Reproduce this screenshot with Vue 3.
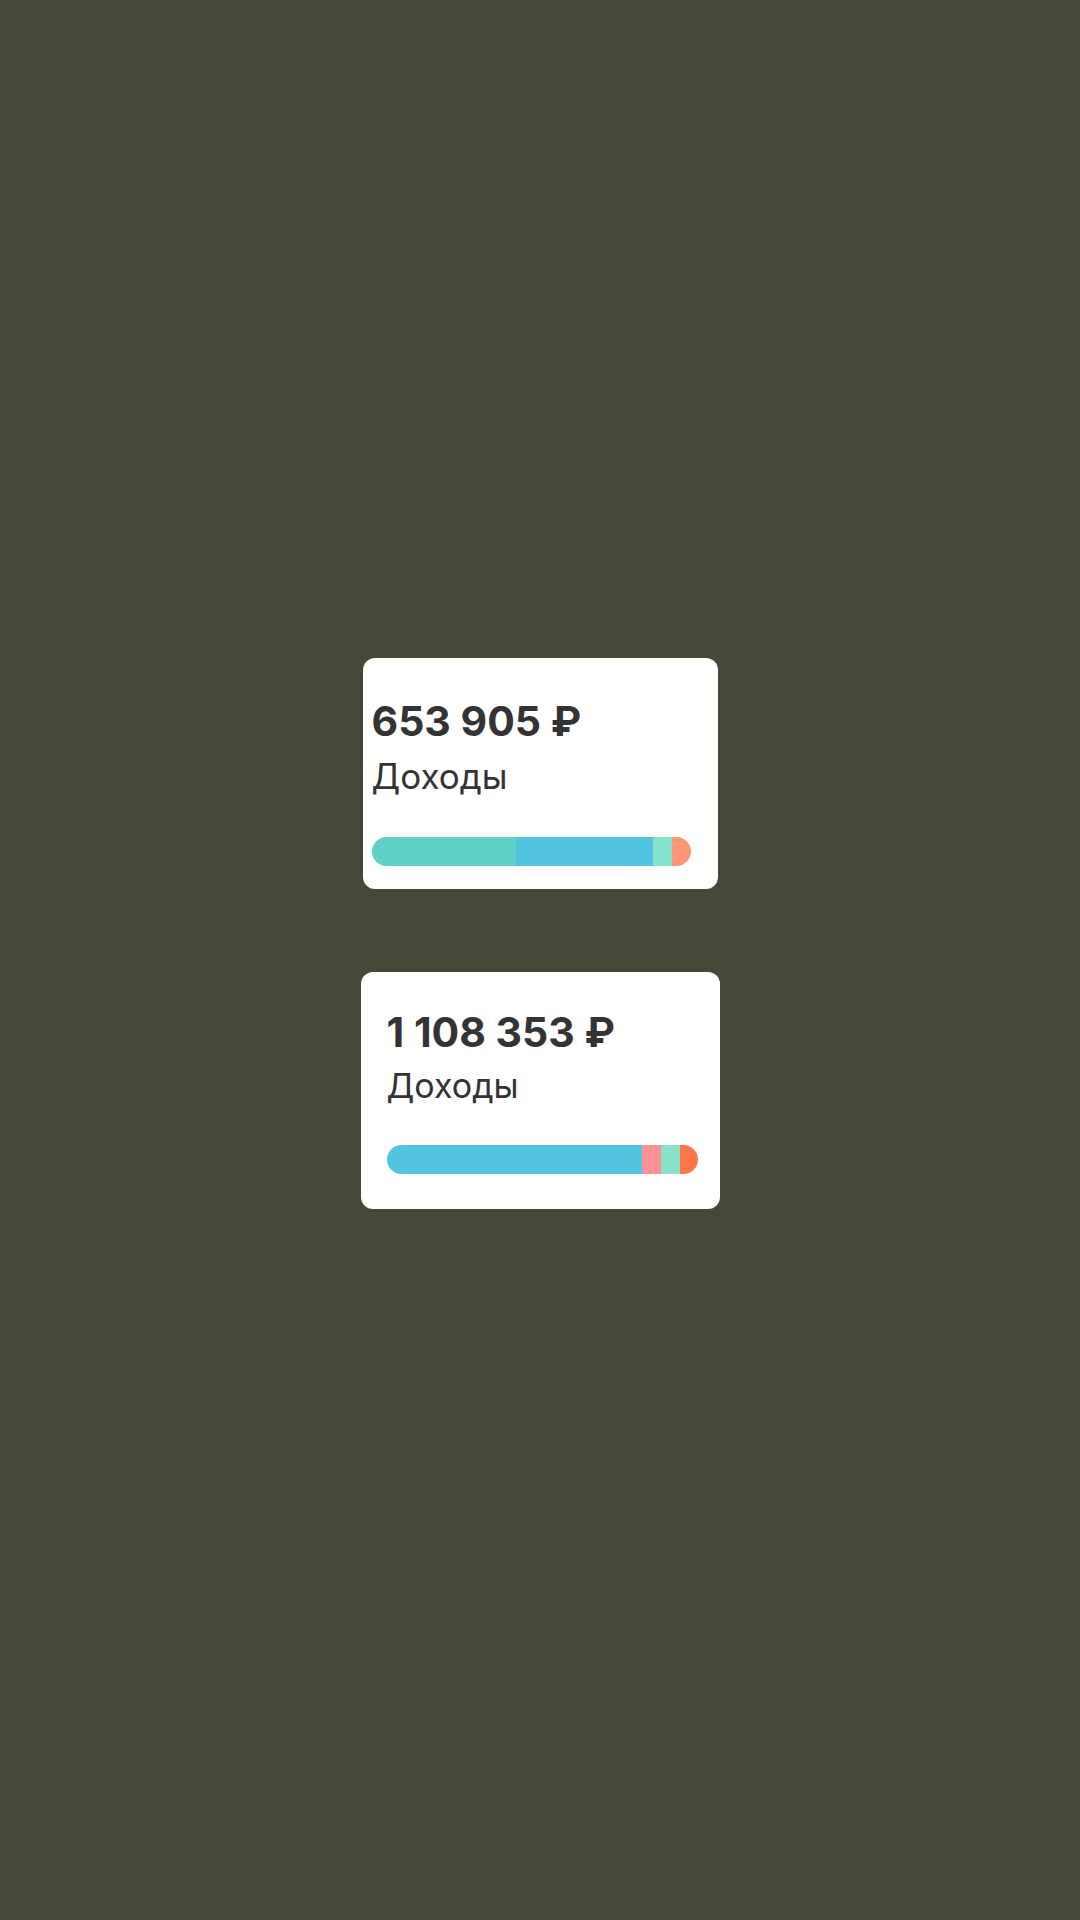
<script setup>
import { ref } from 'vue'

const cards = ref([
  {
    id: 'first',
    amount: '653 905 ₽',
    title: 'Доходы',
    parts: [
      { color: '#5fd1c9', value: 144 },
      { color: '#50c4e0', value: 137 },
      { color: '#86e2cb', value: 19 },
      { color: '#fc9676', value: 19 },
    ],
  },
  {
    id: 'second',
    amount: '1 108 353 ₽',
    title: 'Доходы',
    parts: [
      { color: '#50c4e0', value: 255 },
      { color: '#fd9296', value: 19 },
      { color: '#88e2c8', value: 19 },
      { color: '#fb7548', value: 18 },
    ],
  },
])
</script>

<template>
  <main class="page">
    <section v-for="card in cards" :key="card.id" class="card" :class="card.id">
      <h2 class="amount">{{ card.amount }}</h2>
      <p class="title">{{ card.title }}</p>
      <div class="bar">
        <span
          v-for="(part, index) in card.parts"
          :key="index"
          class="part"
          :style="{ flexGrow: part.value, backgroundColor: part.color }"
        ></span>
      </div>
    </section>
  </main>
</template>

<style>
body {
  margin: 0;
  background-color: #464639;
}
</style>

<style scoped>
.page {
  min-height: 100vh;
  box-sizing: border-box;
  padding: 0 16px 54px;
  display: flex;
  flex-direction: column;
  align-items: center;
  justify-content: center;
  gap: 83px;
  font-family: Inter, "Liberation Sans", sans-serif;
  color: #333335;
}
.card {
  width: 100%;
  box-sizing: border-box;
  border-radius: 12px;
  background-color: #fffffe;
}
.first {
  max-width: 355px;
  padding: 39px 27px 23px 9px;
}
.second {
  max-width: 359px;
  padding: 36px 22px 35px 26px;
}
.amount {
  margin: 0 0 7px;
  font-size: 41px;
  line-height: 48px;
  font-weight: 700;
  white-space: nowrap;
}
.title {
  margin: 0;
  font-size: 35px;
  line-height: 48px;
}
.second .amount {
  margin-bottom: 6px;
}
.second .title {
  font-size: 34px;
}
.bar {
  display: flex;
  height: 29px;
  margin-top: 37px;
  border-radius: 15px;
  overflow: hidden;
}
.second .bar {
  margin-top: 35px;
}
.part {
  flex-basis: 0;
}
</style>
